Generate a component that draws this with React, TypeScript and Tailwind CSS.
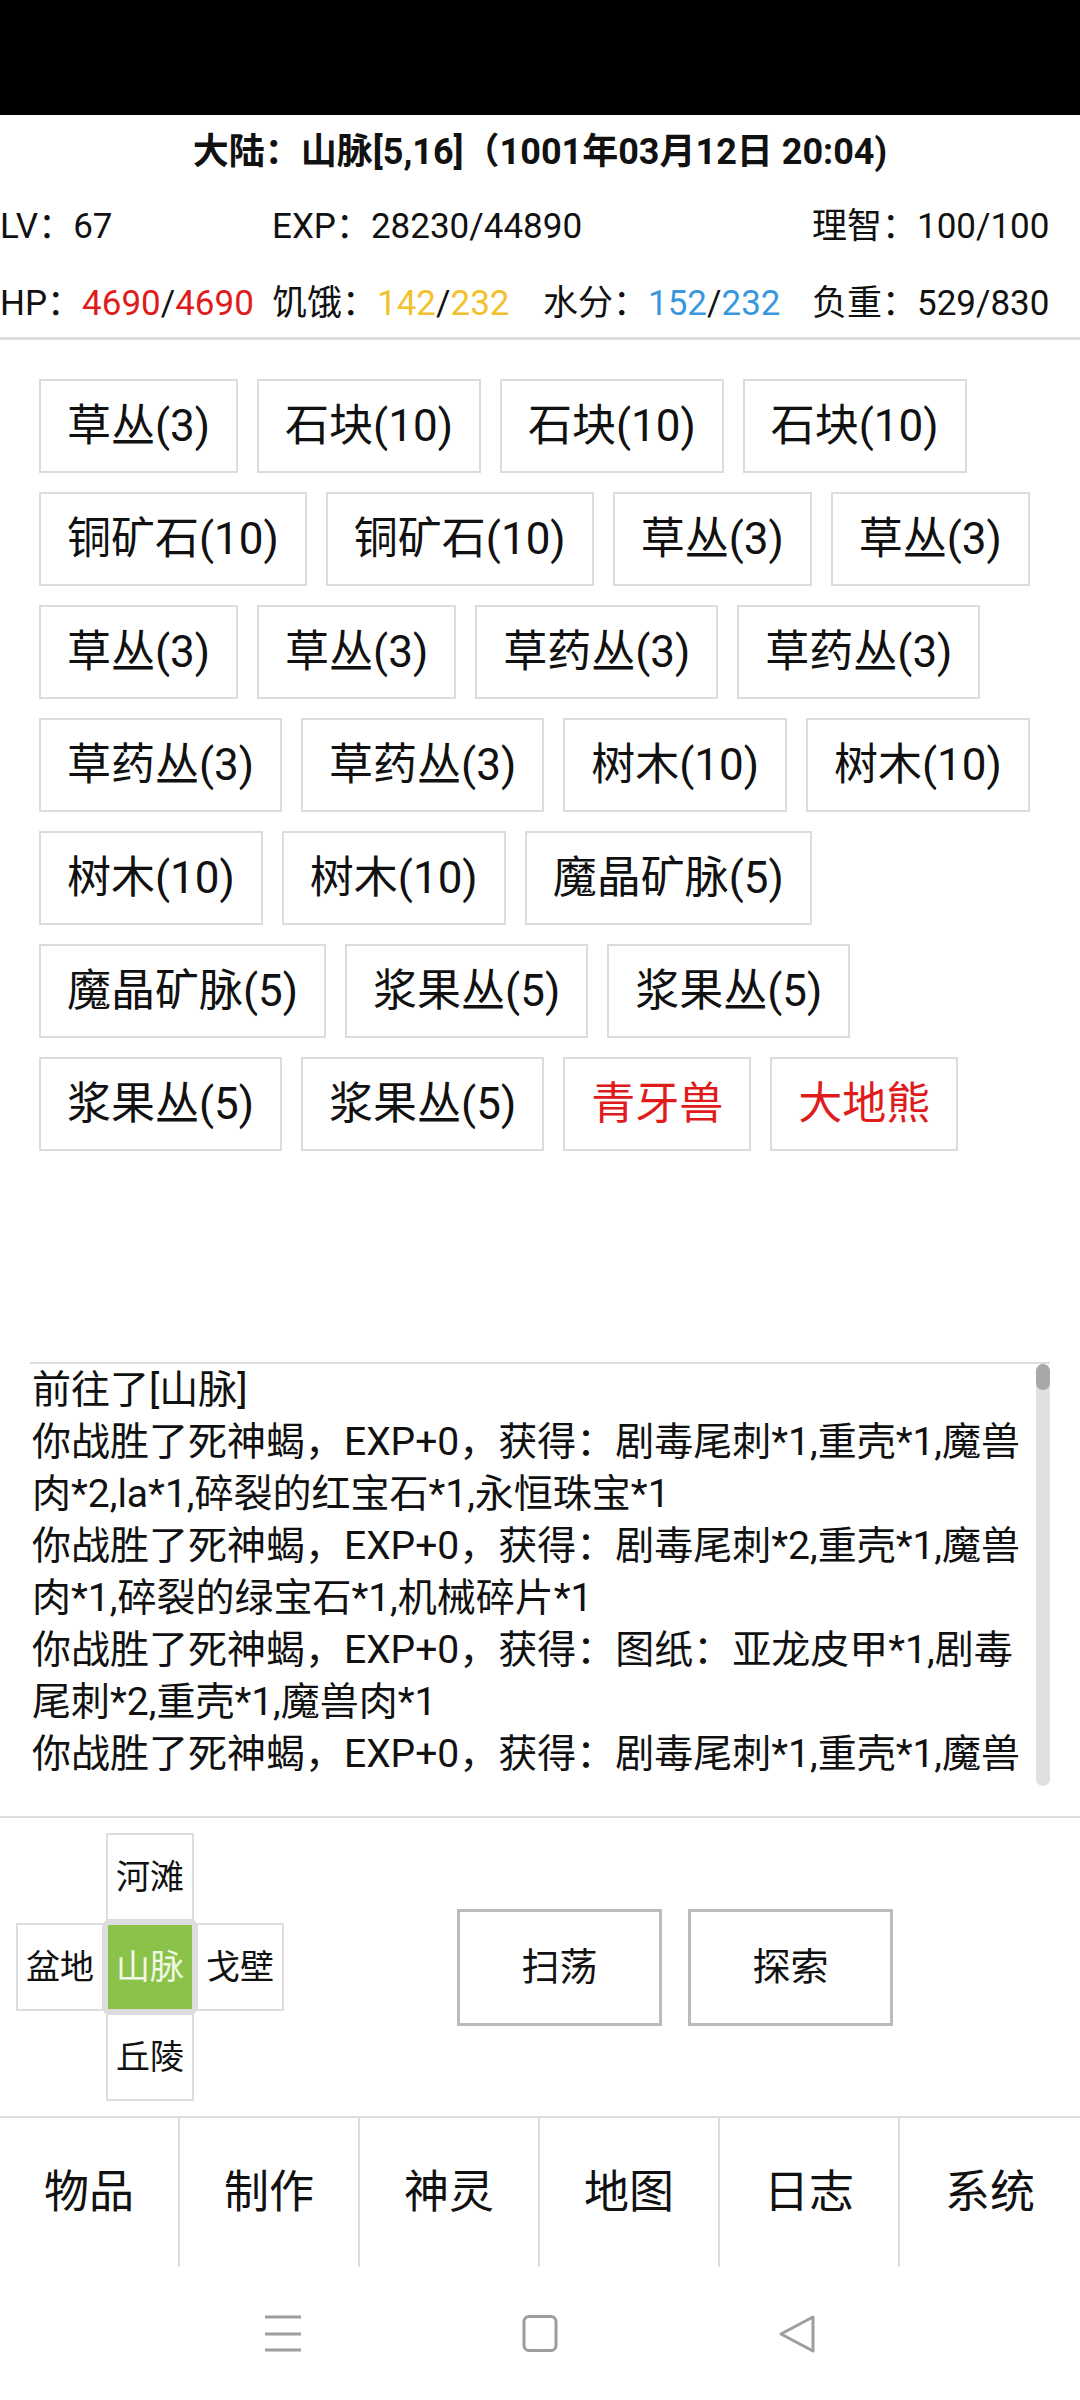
// 游戏主界面：状态栏 + 场景物品 + 日志 + 方向键 + 底部导航
type Item = { name: string; hostile?: boolean };

const items: Item[] = [
  { name: '草丛(3)' },
  { name: '石块(10)' },
  { name: '石块(10)' },
  { name: '石块(10)' },
  { name: '铜矿石(10)' },
  { name: '铜矿石(10)' },
  { name: '草丛(3)' },
  { name: '草丛(3)' },
  { name: '草丛(3)' },
  { name: '草丛(3)' },
  { name: '草药丛(3)' },
  { name: '草药丛(3)' },
  { name: '草药丛(3)' },
  { name: '草药丛(3)' },
  { name: '树木(10)' },
  { name: '树木(10)' },
  { name: '树木(10)' },
  { name: '树木(10)' },
  { name: '魔晶矿脉(5)' },
  { name: '魔晶矿脉(5)' },
  { name: '浆果丛(5)' },
  { name: '浆果丛(5)' },
  { name: '浆果丛(5)' },
  { name: '浆果丛(5)' },
  { name: '青牙兽', hostile: true },
  { name: '大地熊', hostile: true },
];

// 日志：只保留屏幕上能看到的部分
const logs = [
  '前往了[山脉]',
  '你战胜了死神蝎，EXP+0，获得：剧毒尾刺*1,重壳*1,魔兽肉*2,la*1,碎裂的红宝石*1,永恒珠宝*1',
  '你战胜了死神蝎，EXP+0，获得：剧毒尾刺*2,重壳*1,魔兽肉*1,碎裂的绿宝石*1,机械碎片*1',
  '你战胜了死神蝎，EXP+0，获得：图纸：亚龙皮甲*1,剧毒尾刺*2,重壳*1,魔兽肉*1',
  '你战胜了死神蝎，EXP+0，获得：剧毒尾刺*1,重壳*1,魔兽',
];

const tabs = ['物品', '制作', '神灵', '地图', '日志', '系统'];

const Cell = ({ label, active }: { label?: string; active?: boolean }) => {
  if (!label) return <div />;
  return (
    <div
      className={
        active
          ? 'flex items-center justify-center border-2 border-[#dddddd] bg-[#8bc34a] text-[34px] text-[#f1f8e6] outline-2 outline-[#dddddd]'
          : 'flex items-center justify-center border-2 border-[#dddddd] text-[34px]'
      }
    >
      {label}
    </div>
  );
};

export default function App() {
  return (
    <div className="flex h-[2400px] w-[1080px] flex-col overflow-hidden bg-white font-[Roboto,'Noto_Sans_CJK_SC',sans-serif] text-[#111111]">
      {/* 系统状态栏 */}
      <div className="h-[115px] shrink-0 bg-black" />

      {/* 角色信息 */}
      <header className="shrink-0 border-b-[3px] border-[#dddddd] whitespace-nowrap">
        <div className="flex h-[74px] items-center justify-center text-[36px] font-bold">
          大陆：山脉[5,16]（1001年03月12日 20:04)
        </div>
        <div className="grid h-[77px] grid-cols-[272px_271px_269px_1fr] items-center text-[35px]">
          <span>LV：67</span>
          <span className="col-span-2">EXP：28230/44890</span>
          <span>理智：100/100</span>
        </div>
        <div className="grid h-[71px] grid-cols-[272px_271px_269px_1fr] items-start pt-[12px] text-[35px]">
          <span>
            HP：<span className="text-[#e01b1b]">4690</span>/<span className="text-[#e01b1b]">4690</span>
          </span>
          <span>
            饥饿：<span className="text-[#f2c12e]">142</span>/<span className="text-[#f2c12e]">232</span>
          </span>
          <span>
            水分：<span className="text-[#3b97dd]">152</span>/<span className="text-[#3b97dd]">232</span>
          </span>
          <span>负重：529/830</span>
        </div>
      </header>

      {/* 场景物品 */}
      <section className="h-[1022px] shrink-0 pl-[39px] pr-[20px] pt-[39px]">
        <div className="flex flex-wrap gap-x-[19px] gap-y-[19px]">
          {items.map((item, i) => (
            <button
              key={i}
              className={`flex h-[94px] items-center border-2 border-[#dcdcdc] bg-white px-[26px] text-[44px] whitespace-nowrap ${
                item.hostile ? 'text-[#e01b1b]' : 'text-[#111111]'
              }`}
            >
              {item.name}
            </button>
          ))}
        </div>
      </section>

      {/* 日志 */}
      <div className="mx-[30px] flex h-[424px] shrink-0 border-t-2 border-[#dddddd]">
        <div className="min-w-0 flex-1 overflow-hidden pl-[2px] text-[39px] leading-[52px]">
          {logs.map((line, i) => (
            <p key={i}>{line}</p>
          ))}
        </div>
        <div className="w-[14px] shrink-0 rounded-full bg-[#e0e0e0]">
          <div className="h-[26px] rounded-full bg-[#a8a8a8]" />
        </div>
      </div>

      <div className="h-[30px] shrink-0" />

      {/* 方向 + 操作 */}
      <div className="flex h-[300px] shrink-0 items-center border-t-2 border-[#dddddd] pl-[16px]">
        <div className="grid grid-cols-[88px_88px_88px] grid-rows-[88px_88px_88px] gap-[2px]">
          <Cell />
          <Cell label="河滩" />
          <Cell />
          <Cell label="盆地" />
          <Cell label="山脉" active />
          <Cell label="戈壁" />
          <Cell />
          <Cell label="丘陵" />
          <Cell />
        </div>
        <div className="ml-[173px] flex gap-[26px]">
          <button className="flex h-[117px] w-[205px] items-center justify-center border-[3px] border-[#bbbbbb] bg-white text-[38px]">
            扫荡
          </button>
          <button className="flex h-[117px] w-[205px] items-center justify-center border-[3px] border-[#bbbbbb] bg-white text-[38px]">
            探索
          </button>
        </div>
      </div>

      {/* 底部导航 */}
      <nav className="grid h-[151px] shrink-0 grid-cols-6 border-t-2 border-[#dddddd]">
        {tabs.map((t, i) => (
          <div
            key={t}
            className={`flex items-center justify-center text-[45px] ${
              i < tabs.length - 1 ? 'border-r-2 border-[#dddddd]' : ''
            }`}
          >
            {t}
          </div>
        ))}
      </nav>

      {/* 系统导航栏 */}
      <div className="flex flex-1 items-center justify-center gap-[217px] text-[#9e9e9e]">
        <svg width="40" height="40" viewBox="0 0 40 40" fill="none" stroke="currentColor" strokeWidth="3">
          <path d="M2 3h36M2 20h36M2 36h36" />
        </svg>
        <svg width="40" height="40" viewBox="0 0 40 40" fill="none" stroke="currentColor" strokeWidth="3">
          <rect x="4" y="2.5" width="32" height="34" rx="5" />
        </svg>
        <svg width="40" height="40" viewBox="0 0 40 40" fill="none" stroke="currentColor" strokeWidth="3" strokeLinejoin="round">
          <path d="M36 3 L4 20 L36 37 Z" />
        </svg>
      </div>
    </div>
  );
}
